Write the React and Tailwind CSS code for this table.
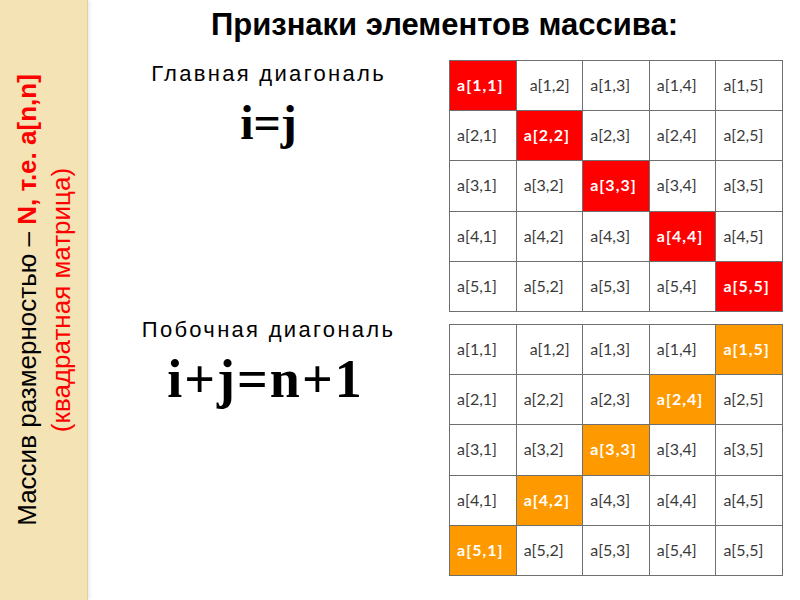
import React from "react";

const N = 5;

function Cell({ r, c, kind }) {
  const hl = kind === "main" ? r === c : r + c === N + 1;
  const bg = hl ? (kind === "main" ? "bg-[#ff0000]" : "bg-[#ff9900]") : "bg-white";
  const pad = r === 1 && c === 2 ? "pl-[13px]" : "pl-[7px]";
  return (
    <td
      className={`${bg} ${pad} border border-[#6f6f6f] w-[66.6px] h-[50.2px] p-0 align-middle`}
    >
      <span
        className={
          hl
            ? "text-white font-bold text-[16px] tracking-[1px]"
            : "text-[#3a3a3a] text-[16px]"
        }
        style={{ fontFamily: "Lato, 'Open Sans', sans-serif" }}
      >
        {`a[${r},${c}]`}
      </span>
    </td>
  );
}

function Matrix({ kind }) {
  const rows = [1, 2, 3, 4, 5];
  return (
    <table className="border-collapse w-[333px] table-fixed">
      <tbody>
        {rows.map((r) => (
          <tr key={r}>
            {rows.map((c) => (
              <Cell key={c} r={r} c={c} kind={kind} />
            ))}
          </tr>
        ))}
      </tbody>
    </table>
  );
}

export default function App() {
  return (
    <div
      className="w-[800px] h-[600px] flex bg-white overflow-hidden"
      style={{ fontFamily: "'Liberation Sans', Arial, sans-serif" }}
    >
      <div className="w-[88px] h-full shrink-0 bg-[#f4e3b5] border-r border-[#e4d09a] shadow-[2px_0_3px_rgba(0,0,0,0.08)] flex items-center justify-center">
        <div className="-rotate-90 whitespace-nowrap flex flex-col items-center text-[26px] leading-[34px]">
          <div className="text-black">
            Массив размерностью –{" "}
            <span className="text-[#ff0000] font-bold">N, т.е. a[n,n]</span>
          </div>
          <div className="text-[#ff0000]">(квадратная матрица)</div>
        </div>
      </div>
      <div className="flex-1 flex flex-col">
        <div className="h-[52px] flex justify-center pt-[7px] text-[31px] font-bold text-black leading-[36px] pl-[1px]">
          Признаки элементов массива:
        </div>
        <div className="flex pt-[8px]">
          <div className="flex-1 flex flex-col items-center pt-[1px]">
            <div className="text-[22px] leading-[26px] tracking-[2.3px] text-black">
              Главная диагональ
            </div>
            <div
              className="text-[48px] font-bold leading-[56px] mt-[8px] text-black"
              style={{ fontFamily: "'Liberation Serif', 'Times New Roman', serif" }}
            >
              i=j
            </div>
          </div>
          <div className="mr-[17px]">
            <Matrix kind="main" />
          </div>
        </div>
        <div className="flex pt-[12px]">
          <div className="flex-1 flex flex-col items-center -mt-[7px]">
            <div className="text-[22px] leading-[26px] tracking-[2.3px] text-black">
              Побочная диагональ
            </div>
            <div
              className="text-[54px] font-bold leading-[56px] mt-[8px] tracking-[2px] pr-[6px] text-black"
              style={{ fontFamily: "'Liberation Serif', 'Times New Roman', serif" }}
            >
              i+j=n+1
            </div>
          </div>
          <div className="mr-[17px]">
            <Matrix kind="anti" />
          </div>
        </div>
      </div>
    </div>
  );
}
